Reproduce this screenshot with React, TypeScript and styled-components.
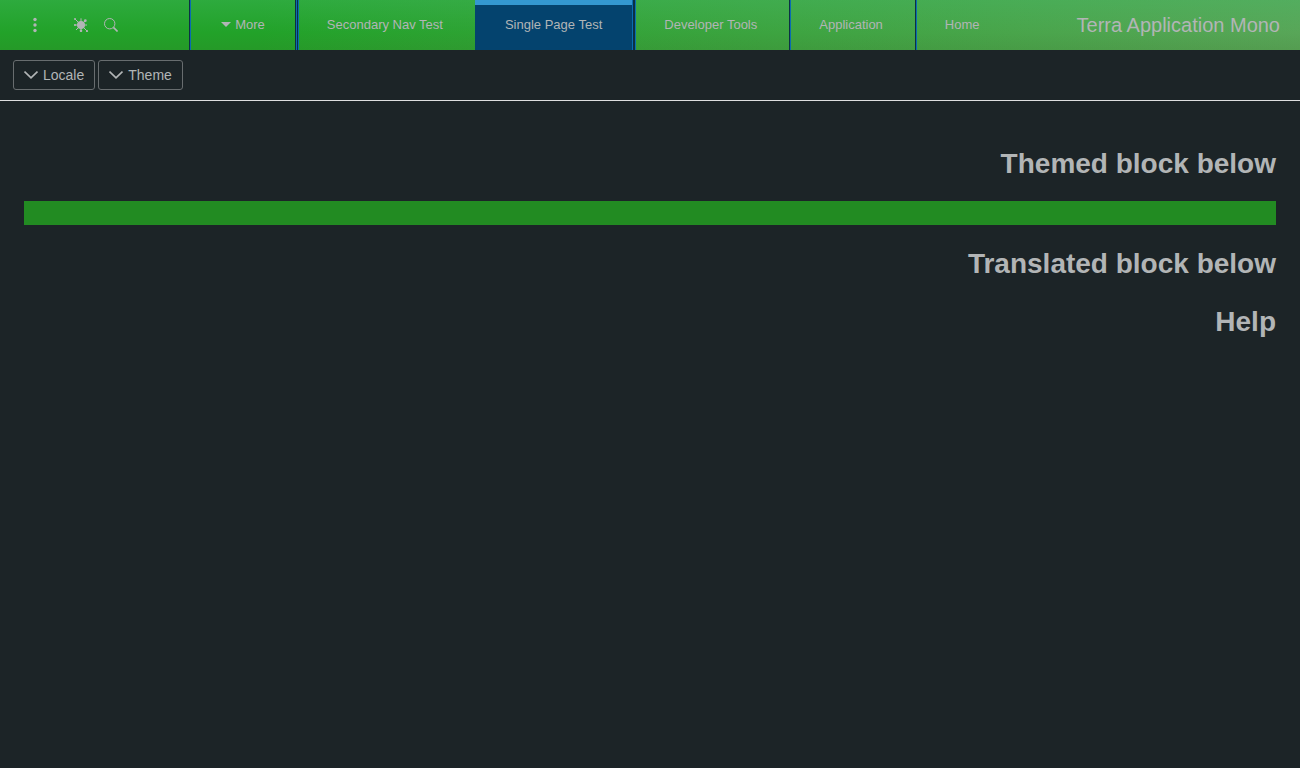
import React from 'react';
import styled, { createGlobalStyle } from 'styled-components';

const GlobalStyle = createGlobalStyle`
  *, *::before, *::after { box-sizing: border-box; }
  html { height: 100%; }
  body {
    margin: 0;
    min-height: 100%;
    background: #1c2427;
    color: #b2b5b6;
    font-family: "Liberation Sans", Arial, Helvetica, sans-serif;
  }
`;

const Header = styled.header`
  display: flex;
  align-items: stretch;
  height: 50px;
  background:
    linear-gradient(to bottom, rgba(72, 190, 110, 0.3), rgba(72, 190, 110, 0) 65%, rgba(60, 90, 30, 0.12)),
    linear-gradient(to right, #22a229 0%, #22a229 20%, #58a658 100%);
`;

const AppTitle = styled.div`
  padding: 0 20px;
  margin-left: 47px;
  font-size: 20px;
  line-height: 50px;
  white-space: nowrap;
`;

const Tabs = styled.nav`
  display: flex;
  gap: 2px;
`;

const dark = '#0c3044';
const blue = '#0a6cb0';

const dividers = {
  start: `inset 1px 0 ${dark}, inset 2px 0 ${blue}`,
  end: `1px 0 ${blue}, 2px 0 ${dark}`,
  both: `-1px 0 ${blue}, -2px 0 ${dark}, 1px 0 ${dark}, 2px 0 ${blue}`,
};

const Tab = styled.button<{ $selected?: boolean; $divider?: keyof typeof dividers }>`
  display: flex;
  align-items: center;
  gap: 4px;
  padding: 0 30px 2px;
  border: 0;
  background: ${(p) => (p.$selected ? 'linear-gradient(#3498d1 5px, #04436e 5px)' : 'transparent')};
  box-shadow: ${(p) => dividers[p.$divider ?? 'start']};
  color: inherit;
  font: inherit;
  font-size: 13px;
  white-space: nowrap;
`;

const Utilities = styled.div`
  display: flex;
  align-items: center;
  margin-right: auto;
  padding-left: 27px;
`;

const IconButton = styled.button<{ $gap?: number }>`
  display: flex;
  padding: 0;
  margin-right: ${(p) => p.$gap ?? 0}px;
  border: 0;
  background: none;
  color: inherit;
`;

const Toolbar = styled.div`
  display: flex;
  justify-content: flex-end;
  gap: 3px;
  padding: 10px 13px;
  border-bottom: 1px solid #dedfe0;
`;

const MenuButton = styled.button`
  display: flex;
  align-items: center;
  gap: 5px;
  height: 30px;
  padding: 0 10px;
  border: 1px solid #686d6f;
  border-radius: 3px;
  background: none;
  color: inherit;
  font: inherit;
  font-size: 14px;
`;

const Content = styled.main`
  padding: 46px 24px;
`;

const Heading = styled.h1`
  margin: 0 0 24px;
  font-size: 28px;
  line-height: 34px;
`;

const ThemedBlock = styled.div`
  height: 24px;
  margin: -4px 0 22px;
  background: #228b22;
`;

const Chevron = () => (
  <svg width="14" height="14" viewBox="0 0 14 14" fill="none" stroke="currentColor" strokeWidth="1.7" aria-hidden="true">
    <path d="M.5 3.5 7 9.9l6.5-6.4" />
  </svg>
);

const Caret = () => (
  <svg width="10" height="6" viewBox="0 0 10 6" fill="currentColor" aria-hidden="true">
    <path d="M0 1h10L5 6z" />
  </svg>
);

const Bug = () => (
  <svg width="14" height="14" viewBox="0 0 14 14" fill="currentColor" stroke="currentColor" aria-hidden="true">
    <circle cx="7" cy="7" r="4" stroke="none" />
    <path d="M7 .3V4M7 10v4M.2 7H4M10 7h3M1 1l3.5 3.5M10 4l1.5-1.5M4 10l-2 2M10 10l3 3" />
    <g stroke="none">
      <circle cx="1" cy="1" r="1" />
      <circle cx="11.3" cy="2.7" r="1.4" />
      <circle cx="1" cy="7" r="1" />
      <circle cx="7" cy="12.8" r="1.3" />
      <circle cx="13" cy="13" r="1.1" />
    </g>
  </svg>
);

const Search = () => (
  <svg width="14" height="14" viewBox="0 0 14 14" fill="none" stroke="currentColor" aria-hidden="true">
    <circle cx="5.7" cy="5.7" r="5.2" />
    <path d="M9.4 9.4l4.2 4.1" strokeWidth="1.7" />
  </svg>
);

const Dots = () => (
  <svg width="16" height="16" viewBox="0 0 16 16" fill="currentColor" aria-hidden="true">
    <circle cx="8" cy="2.5" r="1.7" />
    <circle cx="8" cy="8" r="1.7" />
    <circle cx="8" cy="13.5" r="1.7" />
  </svg>
);

export default function App() {
  return (
    <div dir="rtl">
      <GlobalStyle />
      <Header>
        <AppTitle>Terra Application Mono</AppTitle>
        <Tabs>
          <Tab>Home</Tab>
          <Tab>Application</Tab>
          <Tab>Developer Tools</Tab>
          <Tab $selected $divider="end">Single Page Test</Tab>
          <Tab>Secondary Nav Test</Tab>
          <Tab $divider="both">
            More
            <Caret />
          </Tab>
        </Tabs>
        <Utilities>
          <IconButton aria-label="Search"><Search /></IconButton>
          <IconButton aria-label="Debug" $gap={16}><Bug /></IconButton>
          <IconButton aria-label="Menu" $gap={31}><Dots /></IconButton>
        </Utilities>
      </Header>
      <Toolbar>
        <MenuButton>Theme<Chevron /></MenuButton>
        <MenuButton>Locale<Chevron /></MenuButton>
      </Toolbar>
      <Content>
        <Heading>Themed block below</Heading>
        <ThemedBlock />
        <Heading>Translated block below</Heading>
        <Heading>Help</Heading>
      </Content>
    </div>
  );
}
